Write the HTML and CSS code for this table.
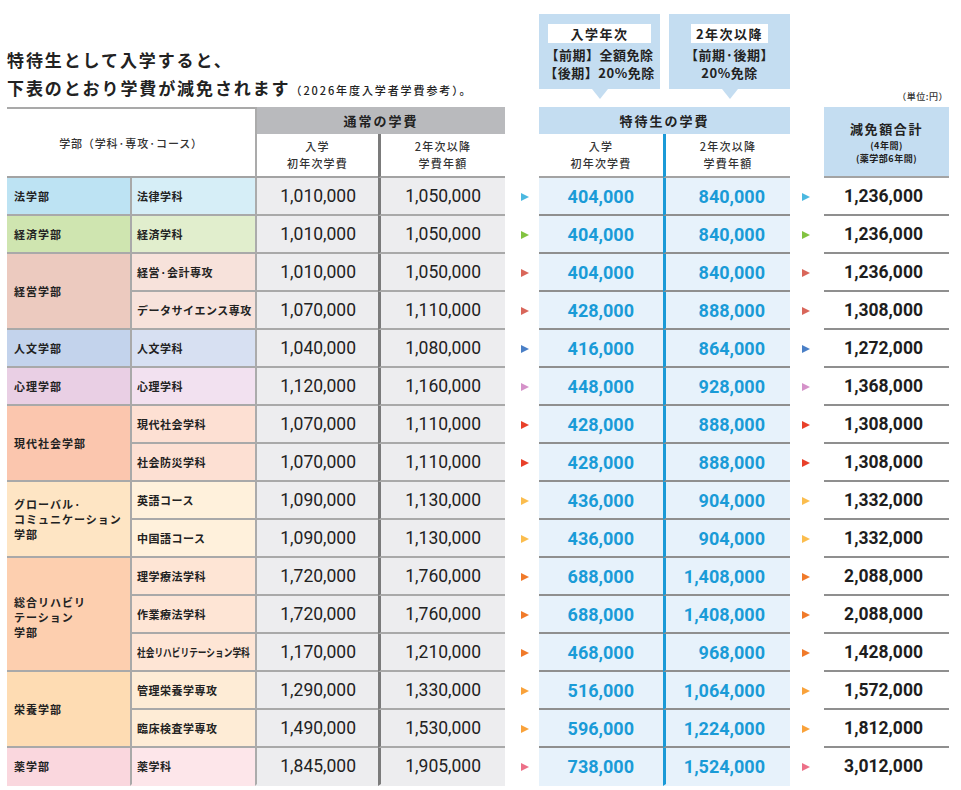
FILE: index.html
```html
<!DOCTYPE html>
<html lang="ja">
<head>
<meta charset="utf-8">
<title>特待生の学費</title>
<link rel="stylesheet" href="styles.css">
</head>
<body>
<div class="sheet">
  <h1 class="title"><span class="t-line">特待生として入学すると、</span><span class="t-line">下表のとおり学費が減免されます<small>（2026年度入学者学費参考）。</small></span></h1>
  <div class="callout c-first"><span class="c-label">入学年次</span><span>【前期】全額免除</span><span>【後期】20%免除</span></div>
  <div class="callout c-second"><span class="c-label">2年次以降</span><span>【前期·後期】</span><span>20%免除</span></div>
  <div class="unit">（単位:円）</div>

  <div class="h-dept">学部（学科·専攻·コース）</div>
  <div class="band band-normal">通常の学費</div>
  <div class="sub sub-n1">入学<br>初年次学費</div>
  <div class="sub sub-n2">2年次以降<br>学費年額</div>
  <div class="band band-special">特待生の学費</div>
  <div class="sub sub-s1">入学<br>初年次学費</div>
  <div class="sub sub-s2">2年次以降<br>学費年額</div>
  <div class="h-total"><b>減免額合計</b><span>(4年間)</span><span>(薬学部6年間)</span></div>

  <!-- 法学部 -->
  <div class="dept f-law">法学部</div>
  <div class="major f-law">法律学科</div>
  <div class="n1">1,010,000</div><div class="n2">1,050,000</div>
  <div class="arr a1 f-law"><i></i></div>
  <div class="s1">404,000</div><div class="s2">840,000</div>
  <div class="arr a2 f-law"><i></i></div>
  <div class="tot">1,236,000</div>

  <!-- 経済学部 -->
  <div class="dept f-eco">経済学部</div>
  <div class="major f-eco">経済学科</div>
  <div class="n1">1,010,000</div><div class="n2">1,050,000</div>
  <div class="arr a1 f-eco"><i></i></div>
  <div class="s1">404,000</div><div class="s2">840,000</div>
  <div class="arr a2 f-eco"><i></i></div>
  <div class="tot">1,236,000</div>

  <!-- 経営学部 -->
  <div class="dept f-mgmt span2">経営学部</div>
  <div class="major f-mgmt">経営·会計専攻</div>
  <div class="n1">1,010,000</div><div class="n2">1,050,000</div>
  <div class="arr a1 f-mgmt"><i></i></div>
  <div class="s1">404,000</div><div class="s2">840,000</div>
  <div class="arr a2 f-mgmt"><i></i></div>
  <div class="tot">1,236,000</div>

  <div class="major f-mgmt">データサイエンス専攻</div>
  <div class="n1">1,070,000</div><div class="n2">1,110,000</div>
  <div class="arr a1 f-mgmt"><i></i></div>
  <div class="s1">428,000</div><div class="s2">888,000</div>
  <div class="arr a2 f-mgmt"><i></i></div>
  <div class="tot">1,308,000</div>

  <!-- 人文学部 -->
  <div class="dept f-hum">人文学部</div>
  <div class="major f-hum">人文学科</div>
  <div class="n1">1,040,000</div><div class="n2">1,080,000</div>
  <div class="arr a1 f-hum"><i></i></div>
  <div class="s1">416,000</div><div class="s2">864,000</div>
  <div class="arr a2 f-hum"><i></i></div>
  <div class="tot">1,272,000</div>

  <!-- 心理学部 -->
  <div class="dept f-psy">心理学部</div>
  <div class="major f-psy">心理学科</div>
  <div class="n1">1,120,000</div><div class="n2">1,160,000</div>
  <div class="arr a1 f-psy"><i></i></div>
  <div class="s1">448,000</div><div class="s2">928,000</div>
  <div class="arr a2 f-psy"><i></i></div>
  <div class="tot">1,368,000</div>

  <!-- 現代社会学部 -->
  <div class="dept f-soc span2">現代社会学部</div>
  <div class="major f-soc">現代社会学科</div>
  <div class="n1">1,070,000</div><div class="n2">1,110,000</div>
  <div class="arr a1 f-soc"><i></i></div>
  <div class="s1">428,000</div><div class="s2">888,000</div>
  <div class="arr a2 f-soc"><i></i></div>
  <div class="tot">1,308,000</div>

  <div class="major f-soc">社会防災学科</div>
  <div class="n1">1,070,000</div><div class="n2">1,110,000</div>
  <div class="arr a1 f-soc"><i></i></div>
  <div class="s1">428,000</div><div class="s2">888,000</div>
  <div class="arr a2 f-soc"><i></i></div>
  <div class="tot">1,308,000</div>

  <!-- グローバル・コミュニケーション学部 -->
  <div class="dept f-glo span2">グローバル·<br>コミュニケーション<br>学部</div>
  <div class="major f-glo">英語コース</div>
  <div class="n1">1,090,000</div><div class="n2">1,130,000</div>
  <div class="arr a1 f-glo"><i></i></div>
  <div class="s1">436,000</div><div class="s2">904,000</div>
  <div class="arr a2 f-glo"><i></i></div>
  <div class="tot">1,332,000</div>

  <div class="major f-glo">中国語コース</div>
  <div class="n1">1,090,000</div><div class="n2">1,130,000</div>
  <div class="arr a1 f-glo"><i></i></div>
  <div class="s1">436,000</div><div class="s2">904,000</div>
  <div class="arr a2 f-glo"><i></i></div>
  <div class="tot">1,332,000</div>

  <!-- 総合リハビリテーション学部 -->
  <div class="dept f-reh span3">総合リハビリ<br>テーション<br>学部</div>
  <div class="major f-reh">理学療法学科</div>
  <div class="n1">1,720,000</div><div class="n2">1,760,000</div>
  <div class="arr a1 f-reh"><i></i></div>
  <div class="s1">688,000</div><div class="s2">1,408,000</div>
  <div class="arr a2 f-reh"><i></i></div>
  <div class="tot">2,088,000</div>

  <div class="major f-reh">作業療法学科</div>
  <div class="n1">1,720,000</div><div class="n2">1,760,000</div>
  <div class="arr a1 f-reh"><i></i></div>
  <div class="s1">688,000</div><div class="s2">1,408,000</div>
  <div class="arr a2 f-reh"><i></i></div>
  <div class="tot">2,088,000</div>

  <div class="major f-reh"><span class="narrow">社会リハビリテーション学科</span></div>
  <div class="n1">1,170,000</div><div class="n2">1,210,000</div>
  <div class="arr a1 f-reh"><i></i></div>
  <div class="s1">468,000</div><div class="s2">968,000</div>
  <div class="arr a2 f-reh"><i></i></div>
  <div class="tot">1,428,000</div>

  <!-- 栄養学部 -->
  <div class="dept f-nut span2">栄養学部</div>
  <div class="major f-nut">管理栄養学専攻</div>
  <div class="n1">1,290,000</div><div class="n2">1,330,000</div>
  <div class="arr a1 f-nut"><i></i></div>
  <div class="s1">516,000</div><div class="s2">1,064,000</div>
  <div class="arr a2 f-nut"><i></i></div>
  <div class="tot">1,572,000</div>

  <div class="major f-nut">臨床検査学専攻</div>
  <div class="n1">1,490,000</div><div class="n2">1,530,000</div>
  <div class="arr a1 f-nut"><i></i></div>
  <div class="s1">596,000</div><div class="s2">1,224,000</div>
  <div class="arr a2 f-nut"><i></i></div>
  <div class="tot">1,812,000</div>

  <!-- 薬学部 -->
  <div class="dept f-pha last">薬学部</div>
  <div class="major f-pha last">薬学科</div>
  <div class="n1 last">1,845,000</div><div class="n2 last">1,905,000</div>
  <div class="arr a1 f-pha"><i></i></div>
  <div class="s1 last">738,000</div><div class="s2 last">1,524,000</div>
  <div class="arr a2 f-pha"><i></i></div>
  <div class="tot last">3,012,000</div>
</div>
</body>
</html>
```

FILE: styles.css
```css
* { box-sizing: border-box; }

html, body {
  margin: 0;
  padding: 0;
  background: #ffffff;
}

body {
  font-family: "Noto Sans CJK JP", "Noto Sans", sans-serif;
  color: #222222;
}

.sheet {
  margin-left: 7px;
  display: grid;
  grid-template-columns: 123px 125px 123px 127px 34px 124px 127px 34px 125px;
  grid-template-rows: 107px 27px 44px;
  grid-auto-rows: 38px;
}

/* ---------- title area ---------- */
.title {
  grid-column: 1 / 5;
  grid-row: 1;
  margin: 0;
  padding-top: 46px;
  font-size: 17px;
  font-weight: 700;
  letter-spacing: 1.9px;
  line-height: 28px;
  color: #222222;
  white-space: nowrap;
}
.t-line { display: block; }
.title small {
  font-size: 11px;
  letter-spacing: 1.9px;
  font-weight: 500;
}

.callout {
  grid-row: 1;
  position: relative;
  width: 121px;
  height: 75px;
  margin-top: 14px;
  background: #c4ddf1;
  display: flex;
  flex-direction: column;
  align-items: center;
  padding-top: 10px;
  font-size: 13px;
  font-weight: 700;
  line-height: 18px;
  letter-spacing: 0.5px;
  color: #222222;
}
.callout::after {
  content: "";
  position: absolute;
  left: 50%;
  bottom: -10px;
  margin-left: -8px;
  border-top: 10px solid #c4ddf1;
  border-left: 8px solid transparent;
  border-right: 8px solid transparent;
}
.c-first { grid-column: 6; justify-self: start; }
.c-second { grid-column: 7; justify-self: end; }
.c-label {
  background: #ffffff;
  height: 19px;
  line-height: 19px;
  text-align: center;
  letter-spacing: 1.5px;
  margin-bottom: 3px;
}
.c-first .c-label { width: 103px; }
.c-second .c-label { width: 77px; }

.unit {
  grid-column: 9;
  grid-row: 1;
  align-self: end;
  justify-self: end;
  margin: 0 1px 4px 0;
  font-size: 9px;
  line-height: 12px;
  letter-spacing: 0.5px;
  color: #333333;
  font-weight: 500;
}

/* ---------- header ---------- */
.h-dept {
  grid-column: 1 / 3;
  grid-row: 2 / 4;
  border-top: 2px solid #a9a9a9;
  border-bottom: 2px solid #a3a3a3;
  display: flex;
  align-items: center;
  justify-content: center;
  font-size: 11px;
  font-weight: 500;
  letter-spacing: 0.8px;
  color: #333333;
}

.band {
  grid-row: 2;
  display: flex;
  align-items: center;
  justify-content: center;
  font-size: 13px;
  font-weight: 700;
  letter-spacing: 2px;
  color: #222222;
}
.band-normal {
  grid-column: 3 / 5;
  background: #b9babd;
  border-left: 2px solid #ababab;
}
.band-special {
  grid-column: 6 / 8;
  background: #c4ddf1;
}

.sub {
  grid-row: 3;
  display: flex;
  align-items: center;
  justify-content: center;
  text-align: center;
  font-size: 11px;
  font-weight: 500;
  line-height: 17px;
  letter-spacing: 1.2px;
  color: #333333;
  border-bottom: 2px solid #a3a3a3;
  background: #ffffff;
}
.sub-n1 { grid-column: 3; border-left: 2px solid #ababab; }
.sub-n2 { grid-column: 4; border-left: 3px solid #7b7b7b; }
.sub-s1 { grid-column: 6; }
.sub-s2 { grid-column: 7; border-left: 3px solid #1b9ad7; }

.h-total {
  grid-column: 9;
  grid-row: 2 / 4;
  background: #c4ddf1;
  border-bottom: 2px solid #a3a3a3;
  display: flex;
  flex-direction: column;
  align-items: center;
  padding-top: 13px;
  color: #222222;
}
.h-total b {
  font-size: 13px;
  font-weight: 700;
  letter-spacing: 1.6px;
  line-height: 18px;
  margin-bottom: 1px;
}
.h-total span {
  font-size: 9px;
  font-weight: 700;
  line-height: 13px;
  letter-spacing: 0.5px;
}

/* ---------- faculty colour sets ---------- */
.f-law  { --d: #bde3f3; --m: #d6eef7; --a: #4bb8e0; }
.f-eco  { --d: #cfe5b0; --m: #e1eecd; --a: #82c341; }
.f-mgmt { --d: #eccabf; --m: #f7e2db; --a: #d9665a; }
.f-hum  { --d: #c3d3ec; --m: #d7e0f2; --a: #4a7fc6; }
.f-psy  { --d: #e9cfe4; --m: #f2e1f0; --a: #d592c9; }
.f-soc  { --d: #fbc6ae; --m: #fde0d3; --a: #e8402a; }
.f-glo  { --d: #fee5c4; --m: #fff1dc; --a: #fbbd4e; }
.f-reh  { --d: #fdcfaf; --m: #fee5d5; --a: #f07a2a; }
.f-nut  { --d: #fedcb3; --m: #feecd6; --a: #f9a23a; }
.f-pha  { --d: #fad7de; --m: #fde6ea; --a: #ec7088; }

/* ---------- body cells ---------- */
.dept {
  grid-column: 1;
  background: var(--d);
  border-bottom: 2px solid #a9a9a9;
  display: flex;
  align-items: center;
  padding-left: 7px;
  font-size: 11px;
  font-weight: 700;
  line-height: 15px;
  letter-spacing: 1px;
  color: #222222;
}
.span2 { grid-row: span 2; }
.span3 { grid-row: span 3; padding-top: 6px; }

.major {
  grid-column: 2;
  background: var(--m);
  border-left: 2px solid #a9a9a9;
  border-bottom: 2px solid #a9a9a9;
  display: flex;
  align-items: center;
  padding-left: 5px;
  font-size: 11px;
  font-weight: 700;
  letter-spacing: 0.5px;
  color: #222222;
  white-space: nowrap;
  overflow: hidden;
}
.narrow {
  display: inline-block;
  letter-spacing: 0;
  transform: scaleX(0.79);
  transform-origin: left center;
}

.n1, .n2, .s1, .s2, .tot {
  display: flex;
  align-items: center;
  justify-content: flex-end;
  font-family: Roboto, "Liberation Sans", sans-serif;
  font-size: 17.5px;
}

.n1, .n2 {
  background: #ededef;
  border-bottom: 2px solid #a9a9a9;
  color: #222222;
  font-weight: 400;
}
.n1 { grid-column: 3; border-left: 2px solid #ababab; padding-right: 22px; }
.n2 { grid-column: 4; border-left: 3px solid #7b7b7b; padding-right: 24px; }

.s1, .s2 {
  background: #e7f2fb;
  border-bottom: 2px solid #8f8f8f;
  color: #1a9bd7;
  font-weight: 700;
  font-size: 18px;
}
.s1 { grid-column: 6; padding-right: 29px; }
.s2 { grid-column: 7; border-left: 3px solid #1b9ad7; padding-right: 25px; }

.tot {
  grid-column: 9;
  border-bottom: 2px solid #8f8f8f;
  color: #1e1e1e;
  font-weight: 700;
  padding-right: 26px;
}

.last { border-bottom-color: transparent; }

.arr {
  display: flex;
  align-items: center;
}
.a1 { grid-column: 5; padding-left: 16px; }
.a2 { grid-column: 8; padding-left: 12px; }
.arr i {
  display: block;
  width: 0;
  height: 0;
  border-left: 8px solid var(--a);
  border-top: 4.5px solid transparent;
  border-bottom: 4.5px solid transparent;
}
```
